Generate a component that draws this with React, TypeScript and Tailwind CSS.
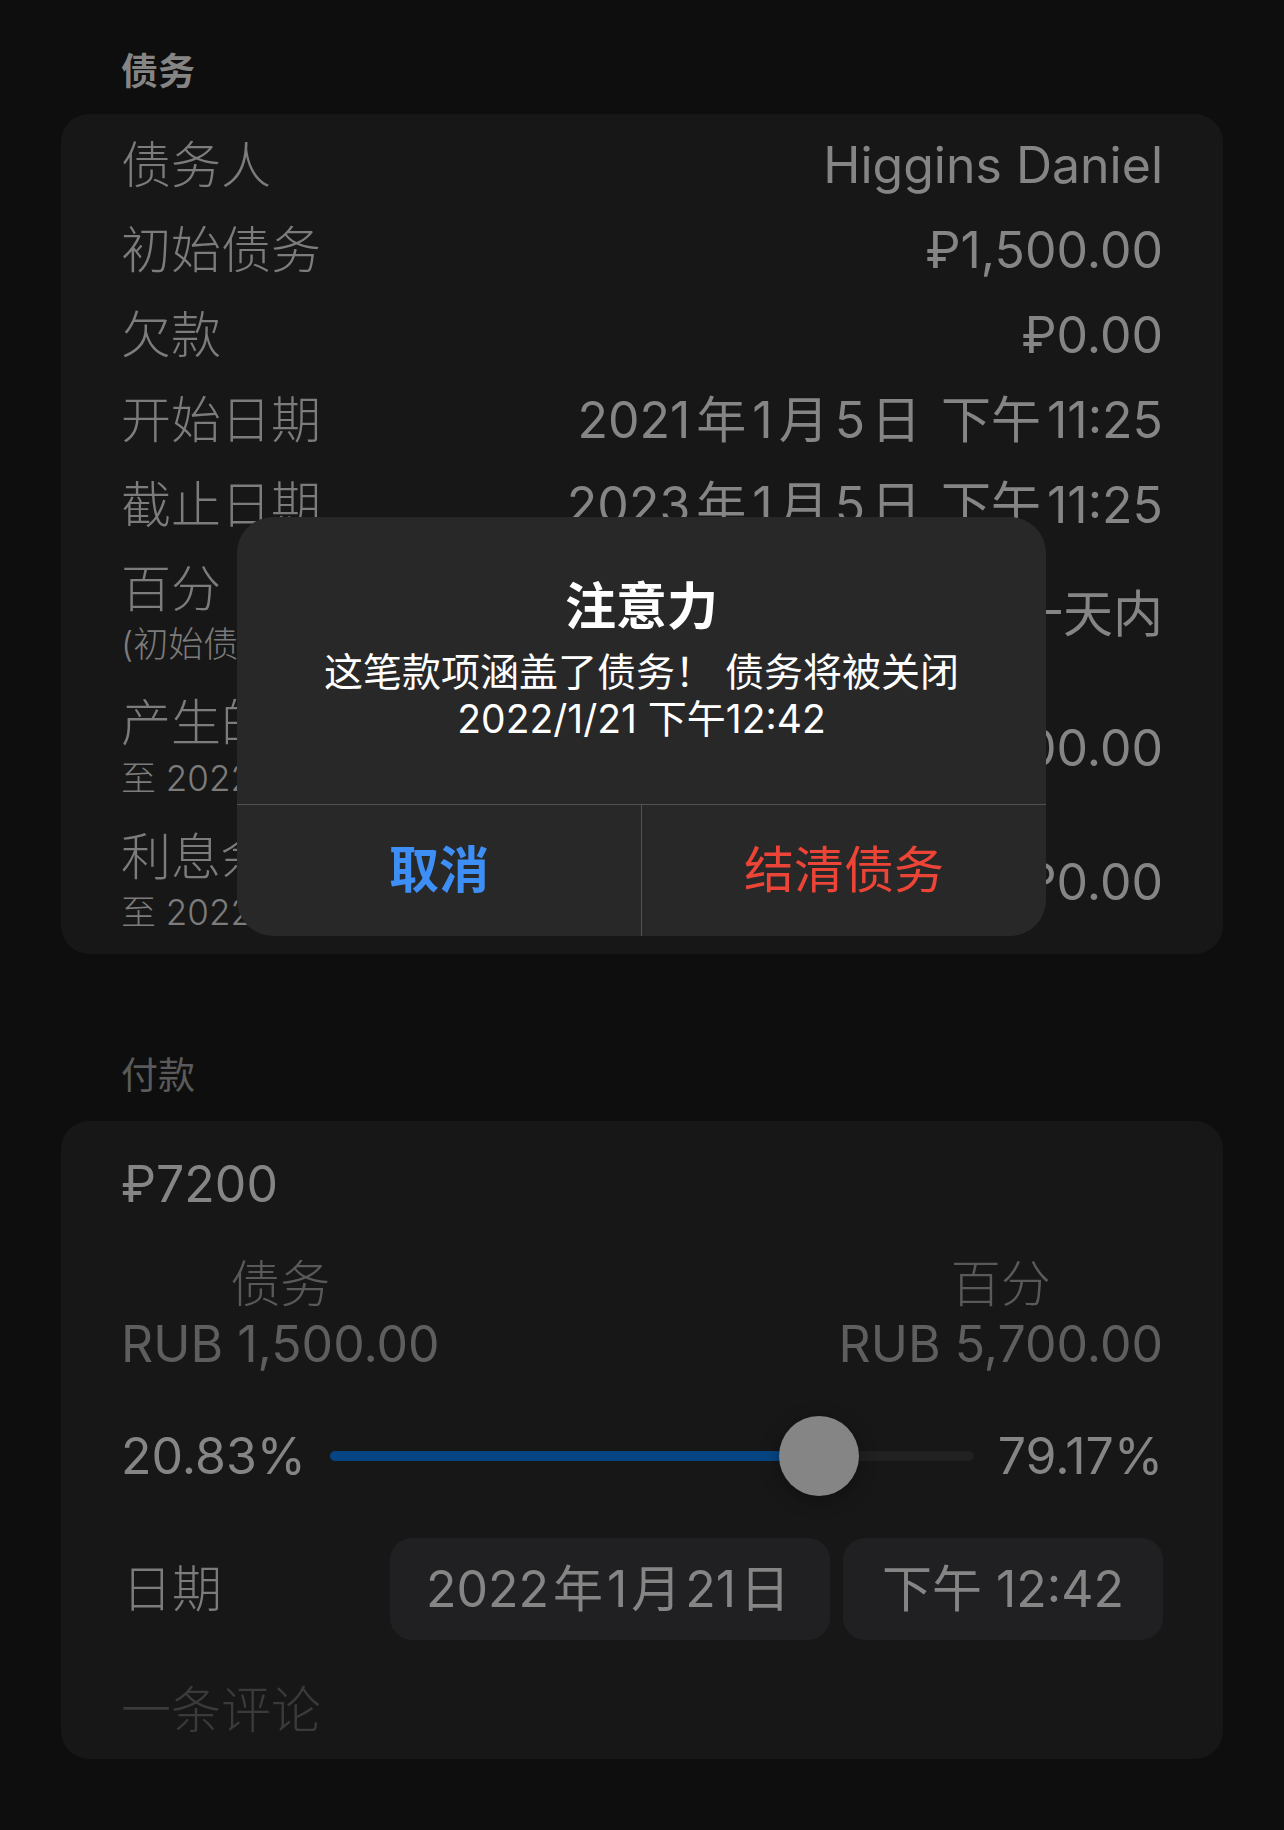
import React from 'react';

const FONT = "font-['Inter','Noto_Sans_CJK_SC',sans-serif]";

// spaces CJK runs away from adjacent digits, like the iOS text layout does
const spaced = (text: string, gap: string) =>
  text.split(/([\u4e00-\u9fff]+| )/).map((part, i) => {
    if (part === ' ') return <span key={i} className="inline-block w-[8px]" />;
    if (/[\u4e00-\u9fff]/.test(part))
      return (
        <span key={i} className={gap}>
          {part}
        </span>
      );
    return <React.Fragment key={i}>{part}</React.Fragment>;
  });

interface RowProps {
  label: string;
  value: React.ReactNode;
}

const Row: React.FC<RowProps> = ({ label, value }) => (
  <div className="h-[85px] flex items-center justify-between">
    <span className="text-[50px] font-light text-[#7c7c7c] leading-[60px]">{label}</span>
    <span className="text-[50px] text-[#858585] leading-[60px] whitespace-nowrap">{value}</span>
  </div>
);

interface TwoLineRowProps {
  label: string;
  sub: string;
  value: string;
}

const TwoLineRow: React.FC<TwoLineRowProps> = ({ label, sub, value }) => (
  <div className="h-[134px] flex items-center justify-between">
    <div className="flex flex-col">
      <span className="text-[50px] font-light text-[#7c7c7c] leading-[60px]">{label}</span>
      <span className="text-[35px] font-light text-[#7c7c7c] leading-[50px]">{sub}</span>
    </div>
    <span className="text-[50px] text-[#858585] leading-[60px] whitespace-nowrap">{value}</span>
  </div>
);

const App: React.FC = () => {
  const thumb = 76;

  return (
    <div className={`relative w-full min-h-[1830px] bg-[#0e0e0e] ${FONT}`}>
      <div className="px-[61px] pt-[50px]">
        {/* debt section */}
        <div className="pl-[60px] h-[44px] leading-[44px] text-[37px] font-semibold text-[#858585]">债务</div>
        <div className="mt-[20px] rounded-[28px] bg-[#171717] px-[60px] pt-[8px] pb-[5px]">
          <Row label="债务人" value="Higgins Daniel" />
          <Row label="初始债务" value="₽1,500.00" />
          <Row label="欠款" value="₽0.00" />
          <Row label="开始日期" value={spaced('2021年1月5日 下午11:25', 'mx-[6px]')} />
          <Row label="截止日期" value={spaced('2023年1月5日 下午11:25', 'mx-[6px]')} />
          <TwoLineRow label="百分" sub="(初始债务的)" value="10% 每一天内" />
          <TwoLineRow label="产生的利息" sub="至 2022/1/21" value="₽5,700.00" />
          <TwoLineRow label="利息余额" sub="至 2022/1/21" value="₽0.00" />
        </div>

        {/* payment section */}
        <div className="mt-[100px] pl-[60px] h-[44px] leading-[44px] text-[37px] text-[#5a5a5a]">付款</div>
        <div className="mt-[23px] rounded-[28px] bg-[#171717] px-[60px] pt-[33px] pb-[19px]">
          <div className="text-[50px] leading-[60px] text-[#858585]">₽7200</div>

          <div className="mt-[40px] flex justify-between">
            <div className="flex flex-col items-center">
              <span className="text-[50px] font-light leading-[60px] text-[#595959]">债务</span>
              <span className="text-[50px] leading-[60px] text-[#5e5e5e]">RUB 1,500.00</span>
            </div>
            <div className="flex flex-col items-center">
              <span className="text-[50px] font-light leading-[60px] text-[#595959]">百分</span>
              <span className="text-[50px] leading-[60px] text-[#5e5e5e]">RUB 5,700.00</span>
            </div>
          </div>

          <div className="mt-[32px] h-[100px] flex items-center">
            <span className="text-[50px] leading-[60px] text-[#858585]">20.83%</span>
            <div className="relative flex-1 mx-[24px] h-[10px] rounded-full bg-[#212121]">
              <div className="h-full rounded-full bg-[#064583]" style={{ width: `${thumb}%` }} />
              <div
                className="absolute top-1/2 w-[80px] h-[80px] -translate-x-1/2 -translate-y-1/2 rounded-full bg-[#858585] shadow-[0_4px_18px_rgba(0,0,0,0.35)]"
                style={{ left: `${thumb}%` }}
              />
            </div>
            <span className="text-[50px] leading-[60px] text-[#858585]">79.17%</span>
          </div>

          <div className="mt-[32px] h-[102px] flex items-center">
            <span className="flex-1 pl-[1px] text-[50px] font-light leading-[60px] text-[#7c7c7c]">日期</span>
            <div className="w-[440px] h-[102px] rounded-[22px] bg-[#202022] flex items-center justify-center text-[50px] text-[#858585] whitespace-nowrap">
              {spaced('2022年1月21日', 'mx-[4px]')}
            </div>
            <div className="ml-[13px] w-[320px] h-[102px] rounded-[22px] bg-[#202022] flex items-center justify-center text-[50px] text-[#858585] whitespace-nowrap">
              下午 12:42
            </div>
          </div>

          <div className="mt-[40px] text-[50px] font-light leading-[60px] text-[#3a3a3a]">一条评论</div>
        </div>
      </div>

      {/* alert */}
      <div className="absolute left-[237px] top-[517px] w-[809px] rounded-[36px] bg-[#282828] overflow-hidden">
        <div className="pt-[60px] pb-[62px] px-[30px] flex flex-col items-center text-white">
          <div className="text-[51px] font-bold leading-[60px]">注意力</div>
          <div className="mt-[11px] text-[39px] leading-[47px] text-center whitespace-nowrap">
            这笔款项涵盖了债务！ 债务将被关闭
            <br />
            2022/1/21 下午12:42
          </div>
        </div>
        <div className="h-[132px] flex border-t border-[#525252]">
          <div className="flex-1 flex items-center justify-center text-[50px] font-bold text-[#3d8ff5] border-r border-[#525252]">
            取消
          </div>
          <div className="flex-1 flex items-center justify-center text-[50px] text-[#ec4436]">结清债务</div>
        </div>
      </div>
    </div>
  );
};

export default App;
